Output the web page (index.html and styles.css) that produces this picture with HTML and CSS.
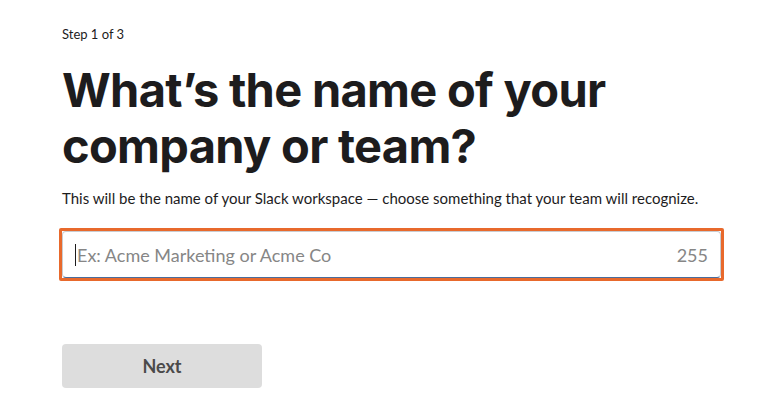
FILE: index.html
```html
<!DOCTYPE html>
<html>
<head>
<meta charset="utf-8">
<link rel="stylesheet" href="styles.css">
</head>
<body>
<main class="page">
  <p class="step">Step 1 of 3</p>
  <h1 class="title">What’s the name of your company or team?</h1>
  <p class="desc">This will be the name of your Slack workspace — choose something that your team will recognize.</p>
  <div class="field">
    <div class="field-inner">
      <span class="caret"></span>
      <span class="placeholder">Ex: Acme Marketing or Acme Co</span>
      <span class="count">255</span>
    </div>
  </div>
  <button class="next">Next</button>
</main>
</body>
</html>
```
FILE: styles.css
```css
html, body {
  margin: 0;
  padding: 0;
  background: #fff;
}
.page {
  padding: 24px 0 0 62px;
  width: 662px;
  font-family: Lato, "Liberation Sans", sans-serif;
  color: #1d1c1d;
}
.step {
  margin: 0;
  font-size: 13px;
  line-height: 20px;
}
.title {
  margin: 18px 0 0 0;
  font-family: Inter, "Liberation Sans", sans-serif;
  font-weight: 700;
  font-size: 47px;
  line-height: 56px;
  letter-spacing: -0.7px;
  width: 600px;
}
.desc {
  margin: 13px 0 0 0;
  font-size: 15px;
  line-height: 22px;
}
.field {
  margin: 19px 0 0 -3px;
  width: 659px;
  border: 3px solid #e8692c;
  border-radius: 2px;
  box-sizing: content-box;
}
.field-inner {
  display: flex;
  align-items: center;
  height: 45px;
  border: 1px solid #c9ccd1;
  border-bottom-color: #4a6d9c;
  border-radius: 4px;
  padding: 0 12px 0 12px;
  font-size: 18px;
  color: #868686;
}
.caret {
  width: 1px;
  height: 22px;
  background: #1d1c1d;
  margin-right: 1px;
}
.placeholder {
  flex: 1;
}
.count {
  color: #868686;
}
.next {
  margin-top: 63px;
  width: 200px;
  height: 44px;
  border: none;
  border-radius: 4px;
  background: #dddddd;
  color: #4a4a4a;
  font-family: Lato, "Liberation Sans", sans-serif;
  font-weight: 700;
  font-size: 18px;
}
```
